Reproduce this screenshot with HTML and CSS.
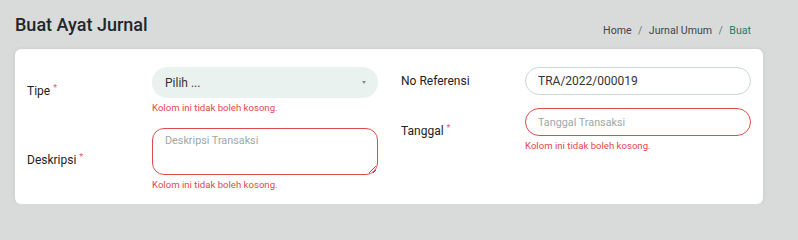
FILE: index.html
```html
<!DOCTYPE html>
<html lang="id">
<head>
<meta charset="utf-8">
<title>Buat Ayat Jurnal</title>
<link rel="stylesheet" href="styles.css">
</head>
<body>
<div class="page">
  <header class="header">
    <h1 class="title">Buat Ayat Jurnal</h1>
    <ol class="breadcrumb">
      <li class="crumb">Home</li>
      <li class="crumb">Jurnal Umum</li>
      <li class="crumb active">Buat</li>
    </ol>
  </header>
  <section class="card">
    <div class="grid">
      <div class="col col-left">
        <div class="group">
          <label class="label">Tipe<span class="req">*</span></label>
          <div class="control">
            <div class="select"><span class="select-text">Pilih ...</span><span class="caret"></span></div>
            <div class="error">Kolom ini tidak boleh kosong.</div>
          </div>
        </div>
        <div class="group">
          <label class="label">Deskripsi<span class="req">*</span></label>
          <div class="control">
            <textarea class="textarea invalid" placeholder="Deskripsi Transaksi"></textarea>
            <div class="error">Kolom ini tidak boleh kosong.</div>
          </div>
        </div>
      </div>
      <div class="col col-right">
        <div class="group">
          <label class="label">No Referensi</label>
          <div class="control">
            <input class="input" type="text" value="TRA/2022/000019">
          </div>
        </div>
        <div class="group">
          <label class="label">Tanggal<span class="req">*</span></label>
          <div class="control">
            <input class="input invalid" type="text" placeholder="Tanggal Transaksi">
            <div class="error">Kolom ini tidak boleh kosong.</div>
          </div>
        </div>
      </div>
    </div>
  </section>
</div>
</body>
</html>
```

FILE: styles.css
```css
* { box-sizing: border-box; }
html, body { margin: 0; padding: 0; }
body {
  background: #d9dbda;
  font-family: Roboto, "Liberation Sans", sans-serif;
  color: #222;
  overflow: hidden;
}
.page {
  padding: 0 35px 0 15px;
}
.header {
  display: flex;
  justify-content: space-between;
  align-items: flex-start;
  height: 35px;
  padding: 14px 12px 0 0;
  margin-bottom: 14px;
}
.title {
  margin: 0;
  font-size: 18px;
  line-height: 21px;
  font-weight: 500;
  color: #1f272b;
}
.breadcrumb {
  display: flex;
  list-style: none;
  margin: 10px 0 0 0;
  padding: 0;
  font-size: 10.6px;
  line-height: 14px;
  color: #444;
}
.crumb + .crumb { padding-left: 6.4px; }
.crumb + .crumb::before {
  content: "/";
  padding-right: 6.4px;
  color: #6c757d;
}
.crumb.active { color: #1f7a68; }
.card {
  background: #fff;
  border-radius: 6px;
  box-shadow: 0 0 4px rgba(0, 0, 0, 0.08);
  padding: 18px 12px 8px 12px;
  min-height: 155px;
}
.grid {
  display: grid;
  grid-template-columns: 351px 350px;
  column-gap: 23px;
}
.col {
  display: flex;
  flex-direction: column;
  gap: 13px;
}
.group {
  display: grid;
  grid-template-columns: 125px 1fr;
  align-items: center;
}
.col-right .group { grid-template-columns: 124px 1fr; }
.label {
  font-size: 12px;
  line-height: 16px;
  color: #222;
}
.req {
  color: #e2626b;
  font-size: 9px;
  vertical-align: top;
  margin-left: 3px;
  line-height: 10px;
}
.control {
  display: flex;
  flex-direction: column;
}
.select {
  height: 31px;
  border-radius: 16px;
  background: #eaf2ef;
  display: flex;
  align-items: center;
  justify-content: space-between;
  padding: 0 12px 0 13px;
}
.select-text {
  font-size: 12px;
  color: #333;
}
.caret {
  width: 0;
  height: 0;
  border-left: 2.5px solid transparent;
  border-right: 2.5px solid transparent;
  border-top: 3px solid #8a8a8a;
}
.input {
  height: 28px;
  border: 1px solid #ccd8d5;
  border-radius: 14px;
  padding: 0 12px;
  font-family: Roboto, "Liberation Sans", sans-serif;
  font-size: 12px;
  color: #333;
  outline: none;
  background: #fff;
  width: 100%;
}
.textarea {
  height: 47px;
  border: 1px solid #ccd8d5;
  border-radius: 12px;
  padding: 5px 12px;
  font-family: Roboto, "Liberation Sans", sans-serif;
  font-size: 12px;
  line-height: 14px;
  color: #333;
  outline: none;
  width: 100%;
  display: block;
  resize: vertical;
}
.invalid { border-color: #e04a4a; }
.input::placeholder, .textarea::placeholder {
  color: #9ea8a7;
  font-size: 10.8px;
}
.error {
  margin-top: 2px;
  font-size: 9.6px;
  line-height: 15px;
  color: #e04a4a;
}
```
